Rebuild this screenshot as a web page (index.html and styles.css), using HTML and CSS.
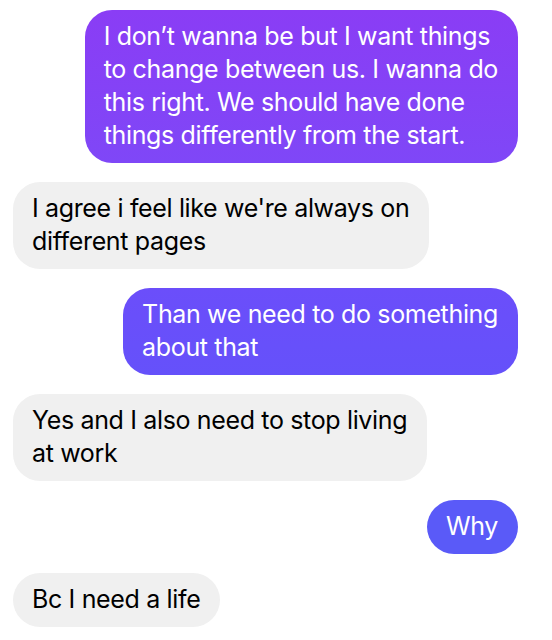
FILE: index.html
```html
<!DOCTYPE html>
<html lang="en">
<head>
    <meta charset="UTF-8">
    <meta name="viewport" content="width=device-width, initial-scale=1.0">
    <title>Messages</title>
    <link rel="stylesheet" href="styles.css">
</head>
<body>
    <div class="thread">
        <div class="bubble sent sent-1">I don’t wanna be but I want things<br>to change between us. I wanna do<br>this right. We should have done<br>things differently from the start.</div>
        <div class="bubble received">I agree i feel like we're always on<br>different pages</div>
        <div class="bubble sent sent-2">Than we need to do something<br>about that</div>
        <div class="bubble received">Yes and I also need to stop living<br>at work</div>
        <div class="bubble sent sent-3">Why</div>
        <div class="bubble received">Bc I need a life</div>
    </div>
</body>
</html>
```

FILE: styles.css
```css
body {
    margin: 0;
    background: #ffffff;
    font-family: 'Inter', 'Roboto', sans-serif;
}

.thread {
    display: flex;
    flex-direction: column;
    gap: 19px;
    padding: 10px 34px 0 13px;
}

.bubble {
    padding: 10px 20px 11px 19px;
    border-radius: 27px;
    font-size: 25px;
    line-height: 33px;
    letter-spacing: -0.35px;
    white-space: nowrap;
}

.sent {
    align-self: flex-end;
    color: #ffffff;
}

.sent-1 { background: linear-gradient(180deg, #8a3df5, #7f47f7); }
.sent-2 { background: linear-gradient(180deg, #6b4efa, #6551fa); }
.sent-3 { background: #5a5af8; }

.received {
    align-self: flex-start;
    background: #f0f0f0;
    color: #000000;
}
```
